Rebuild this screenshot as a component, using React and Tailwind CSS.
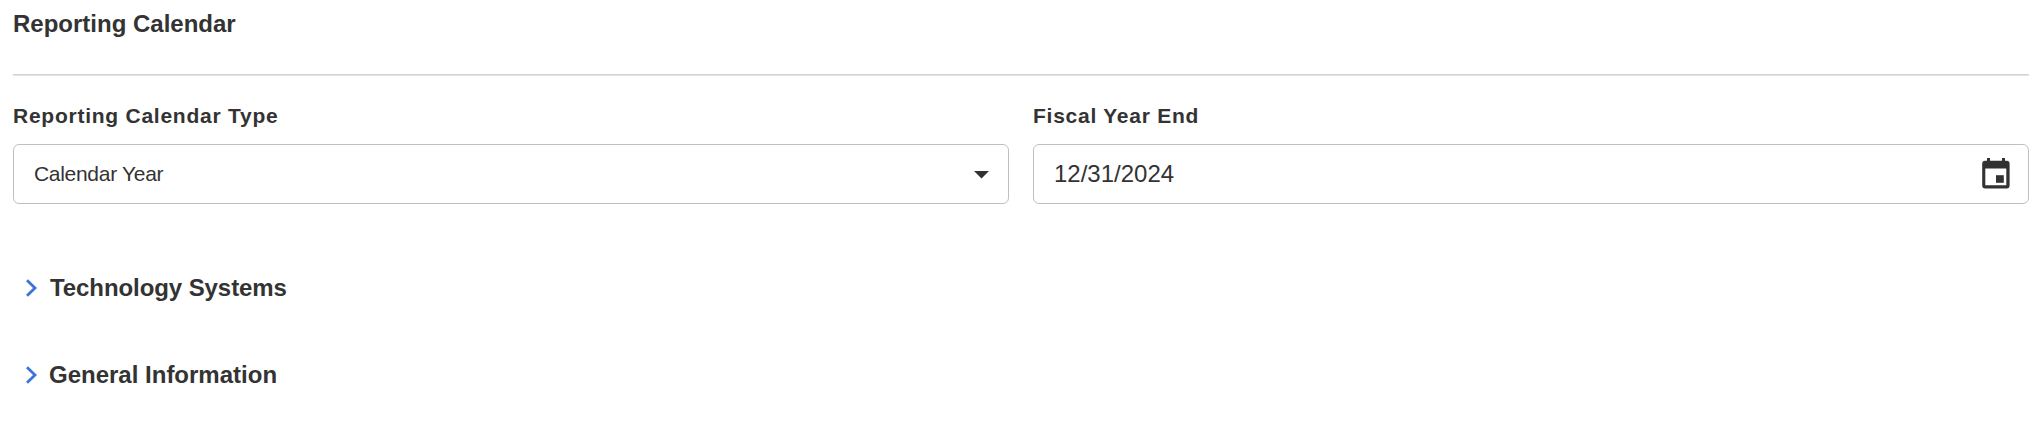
import React from 'react';

const sections = [
  { title: 'Technology Systems', row: 'mt-[64px]', text: 'ml-[12px] tracking-[-0.08px]' },
  { title: 'General Information', row: 'mt-[47px]', text: 'ml-[11px]' },
];

function Chevron() {
  return (
    <svg className="w-[13px] h-[20px]" viewBox="0 0 13 20" fill="none" stroke="#3b74d8" strokeWidth="2.8">
      <path d="M2 2.2L10 10l-8 7.8" />
    </svg>
  );
}

function CalendarIcon() {
  return (
    <svg className="w-[28px] h-[31px]" viewBox="0 0 28 31" fill="#323232">
      <path fillRule="evenodd" d="M5 0h3v2.8h12V0h3v2.8h1.6a3 3 0 0 1 3 3v21.8a3 3 0 0 1-3 3H3.2a3 3 0 0 1-3-3V5.8a3 3 0 0 1 3-3H5zM3.3 10.6v16.7h21V10.6z" />
      <path d="M14 17.2h7.8v7.6H14z" />
    </svg>
  );
}

function Field({ label, children }) {
  return (
    <div className="min-w-0">
      <label className="block text-[21px] leading-[24px] font-bold tracking-[0.75px]">{label}</label>
      <div className="mt-[16px] h-[60px] flex items-center justify-between border border-[#c0c0c0] rounded-[6px] pl-[20px]">
        {children}
      </div>
    </div>
  );
}

export default function App() {
  return (
    <div className="h-[430px] overflow-hidden bg-white pl-[13px] pr-[15px] pt-[10px] text-[#333] font-['Liberation_Sans',Arial,sans-serif]">
      <h2 className="text-2xl leading-[28px] font-bold">Reporting Calendar</h2>
      <div className="mt-[36px] h-[2px] bg-[#e2e4ea] border-t border-[#d0d2d6]" />

      <div className="mt-[28px] grid grid-cols-2 gap-[24px]">
        <Field label="Reporting Calendar Type">
          <span className="text-[21px] tracking-[-0.3px]">Calendar Year</span>
          <svg className="mr-[19px] mt-[2px] w-[15px] h-[8px]" viewBox="0 0 15 8" fill="#323232">
            <path d="M0 0h15L7.5 7.5z" />
          </svg>
        </Field>
        <Field label="Fiscal Year End">
          <span className="text-2xl">12/31/2024</span>
          <div className="mr-[18px] pb-[2px]">
            <CalendarIcon />
          </div>
        </Field>
      </div>

      {sections.map((s) => (
        <div key={s.title} className={`flex items-center h-[40px] pl-[12px] ${s.row}`}>
          <Chevron />
          <h3 className={`text-2xl leading-[28px] font-bold ${s.text}`}>{s.title}</h3>
        </div>
      ))}
    </div>
  );
}
